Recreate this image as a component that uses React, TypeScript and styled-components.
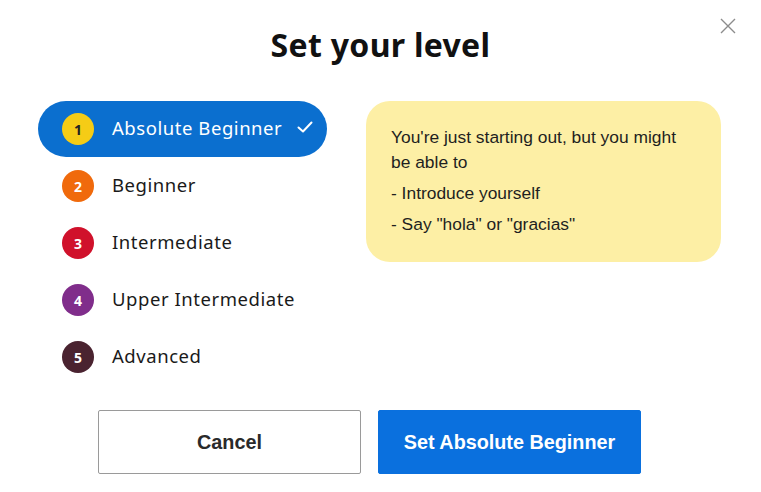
import React from "react";
import styled, { createGlobalStyle } from "styled-components";

const Global = createGlobalStyle`
  html, body { margin: 0; padding: 0; background: #fff; }
  body { font-family: "Liberation Sans", Arial, sans-serif; }
  * { box-sizing: border-box; }
`;

const Dialog = styled.div`
  position: relative;
  width: 761px;
  height: 492px;
  padding-top: 25px;
`;

const Title = styled.h1`
  margin: 0;
  text-align: center;
  font-family: "Noto Sans", "Lato", sans-serif;
  font-weight: 700;
  font-size: 32px;
  letter-spacing: 0.3px;
  line-height: 40px;
  color: #111;
`;

const Close = styled.button`
  position: absolute;
  top: 17px;
  right: 24px;
  width: 18px;
  height: 18px;
  padding: 0;
  border: 0;
  background: transparent;
  display: flex;
  align-items: center;
  justify-content: center;
`;

const Main = styled.div`
  display: flex;
  align-items: flex-start;
  gap: 39px;
  padding-left: 38px;
  margin-top: 36px;
`;

const LevelList = styled.ul`
  list-style: none;
  margin: 0;
  padding: 0;
  width: 289px;
  display: flex;
  flex-direction: column;
  gap: 1px;
`;

const Level = styled.li<{ $active?: boolean }>`
  height: 56px;
  display: flex;
  align-items: center;
  padding-left: 24px;
  padding-right: 14px;
  border-radius: 28px;
  background: ${(p) => (p.$active ? "#0b6fcf" : "transparent")};
  color: ${(p) => (p.$active ? "#fff" : "#1a1a1a")};
`;

const Badge = styled.span<{ $bg: string; $fg: string }>`
  width: 32px;
  height: 32px;
  flex: 0 0 32px;
  border-radius: 50%;
  background: ${(p) => p.$bg};
  color: ${(p) => p.$fg};
  display: flex;
  align-items: center;
  justify-content: center;
  font-family: "Noto Sans", "Lato", sans-serif;
  font-weight: 700;
  font-size: 14px;
`;

const Label = styled.span`
  margin-left: 18px;
  margin-top: -3px;
  font-family: "Noto Sans", "Lato", sans-serif;
  font-size: 18.5px;
  letter-spacing: 0.55px;
  flex: 1;
`;

const Check = styled.span`
  display: flex;
  margin-top: -4px;
`;

const InfoBox = styled.div`
  width: 355px;
  height: 161px;
  background: #fdefa5;
  border-radius: 24px;
  padding: 24px 30px 0 25px;
  color: #1f1f1f;
  font-size: 17.4px;
  line-height: 25px;
`;

const InfoText = styled.p`
  margin: 0;
`;

const InfoItem = styled.p`
  margin: 6px 0 0;
`;

const Actions = styled.div`
  display: flex;
  gap: 17px;
  padding-left: 98px;
  margin-top: 25px;
`;

const Button = styled.button<{ $primary?: boolean }>`
  width: 263px;
  height: 64px;
  border: 1px solid ${(p) => (p.$primary ? "#0a70de" : "#9a9a9a")};
  background: ${(p) => (p.$primary ? "#0a70de" : "#fff")};
  color: ${(p) => (p.$primary ? "#fff" : "#2a2a2a")};
  font-family: "Liberation Sans", Arial, sans-serif;
  font-weight: 700;
  font-size: 19.8px;
  border-radius: 2px;
  padding: 0;
`;

const levels = [
  { n: 1, name: "Absolute Beginner", bg: "#f5cc16", fg: "#222" },
  { n: 2, name: "Beginner", bg: "#f06a0c", fg: "#fff" },
  { n: 3, name: "Intermediate", bg: "#d0112b", fg: "#fff" },
  { n: 4, name: "Upper Intermediate", bg: "#802d8b", fg: "#fff" },
  { n: 5, name: "Advanced", bg: "#4a2330", fg: "#fff" },
];

export default function App() {
  return (
    <>
      <Global />
      <Dialog>
        <Title>Set your level</Title>
        <Close aria-label="Close">
          <svg width="16" height="16" viewBox="0 0 16 16">
            <path d="M1 1L15 15M15 1L1 15" stroke="#8c8c8c" strokeWidth="1.4" />
          </svg>
        </Close>
        <Main>
          <LevelList>
            {levels.map((l) => (
              <Level key={l.n} $active={l.n === 1}>
                <Badge $bg={l.bg} $fg={l.fg}>{l.n}</Badge>
                <Label>{l.name}</Label>
                {l.n === 1 && (
                  <Check>
                    <svg width="16" height="12" viewBox="0 0 16 12">
                      <path d="M1.5 6.5L6 10.5L14.5 1.5" fill="none" stroke="#fff" strokeWidth="2" strokeLinecap="round" strokeLinejoin="round" />
                    </svg>
                  </Check>
                )}
              </Level>
            ))}
          </LevelList>
          <InfoBox>
            <InfoText>You're just starting out, but you might be able to</InfoText>
            <InfoItem>- Introduce yourself</InfoItem>
            <InfoItem>- Say "hola" or "gracias"</InfoItem>
          </InfoBox>
        </Main>
        <Actions>
          <Button>Cancel</Button>
          <Button $primary>Set Absolute Beginner</Button>
        </Actions>
      </Dialog>
    </>
  );
}
